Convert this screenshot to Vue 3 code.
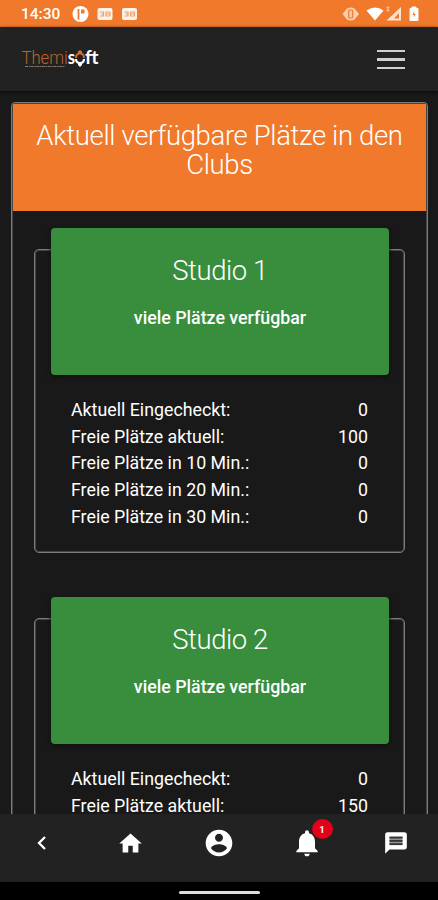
<script setup>
const clubs = [
  { name: 'Studio 1', free: 100 },
  { name: 'Studio 2', free: 150 },
].map((c) => ({
  name: c.name,
  rows: [
    ['Aktuell Eingecheckt:', 0],
    ['Freie Plätze aktuell:', c.free],
    ['Freie Plätze in 10 Min.:', 0],
    ['Freie Plätze in 20 Min.:', 0],
    ['Freie Plätze in 30 Min.:', 0],
  ],
}))
</script>

<template>
  <div class="phone">
    <div class="status">
      <span class="time">14:30</span>
      <svg class="notifications" width="66" height="18" viewBox="0 0 66 18">
        <circle cx="8.500" cy="9" r="8" fill="#fff" />
        <path d="M6.500 4v10.500" stroke="#f0792b" stroke-width="1.800" />
        <path d="M9 4.500h3.500v4H9z" fill="#f0792b" />
        <g fill="#fff4ec">
          <rect x="25.500" y="3" width="15" height="12" rx="2" />
          <rect x="50" y="3" width="15" height="12" rx="2" />
        </g>
        <g fill="none" stroke="#f0a06c" stroke-width="1.200">
          <path d="M28 7h3.500v4H28M29 9h2.500M34 7h4v4h-4zM34 9h4" />
          <path d="M52.500 7H56v4h-3.500M53.500 9H56M58.500 7h4v4h-4zM58.500 9h4" />
        </g>
      </svg>
      <svg class="system" width="78" height="18" viewBox="0 0 78 18">
        <path d="M0.500 9L5 3.500Q9 1.500 12.500 3.500L17 9l-4.500 5.500Q9 16.500 5 14.500z" fill="#fbd0b2" />
        <rect x="6.700" y="5" width="4" height="8" rx="1" fill="#fbc7a4" stroke="#f0792b" stroke-width="1.200" />
        <path d="M24.500 5.500Q33 -.5 41.500 5.500L33 15.500z" fill="#fff" />
        <path d="M44.500 15.500L59 2v13.500z" fill="#fde3d2" />
        <path d="M52 13.500L57 8v5.500z" fill="#f0792b" />
        <path d="M46 1.500v5M44.500 2.500h3M44.500 5.500h3" stroke="#f9bd94" stroke-width="1.300" />
        <path d="M68 3.500h2V2h4v1.500h2V15.500h-8z" fill="#fff" stroke="#fff" stroke-linejoin="round" />
        <path d="M72.300 6L70.500 10h1.300v2.500L73.700 9h-1.400z" fill="#f0792b" />
      </svg>
    </div>

    <header class="header">
      <svg class="logo" width="80" height="24" viewBox="0 0 80 24">
        <text x="0.500" y="17" class="logo-thin" textLength="53.500" lengthAdjust="spacingAndGlyphs">Themi<tspan class="logo-bold">s</tspan></text>
        <text x="64" y="17" class="logo-bold" textLength="13.500" lengthAdjust="spacingAndGlyphs">ft</text>
        <path d="M55 11c0-3 1.500-4.500 4-4.500s4 1.500 4 4.500" fill="none" stroke="#c9682c" stroke-width="2" />
        <path d="M57 6.500V4.500l2-1.500 2 1.500v2z" fill="#d87031" />
        <path d="M55 12c0 2.500 1.500 4 4 4s4-1.500 4-4" fill="none" stroke="#fff" stroke-width="2.200" />
        <path d="M57 15.500h4v2.500l-2 2-2-2z" fill="#fff" />
        <path d="M4 19.500h40" stroke="#85796f" stroke-dasharray="3 .7 1.500 .5" />
      </svg>
      <div class="burger"><i /><i /><i /></div>
    </header>

    <main class="content">
      <section class="card">
        <h1 class="title">Aktuell verfügbare Plätze in den Clubs</h1>
        <div class="clubs">
          <article v-for="club in clubs" :key="club.name" class="club">
            <div class="banner">
              <h2>{{ club.name }}</h2>
              <p>viele Plätze verfügbar</p>
            </div>
            <dl>
              <div v-for="row in club.rows" :key="row[0]" class="row">
                <dt>{{ row[0] }}</dt>
                <dd>{{ row[1] }}</dd>
              </div>
            </dl>
          </article>
        </div>
      </section>
    </main>

    <nav class="nav">
      <div class="tab"><svg width="28" height="28" viewBox="0 0 28 28"><path d="M17 8l-6 6 6 6" fill="none" stroke="#fff" stroke-width="2.300" /></svg></div>
      <div class="tab"><svg width="27" height="27" viewBox="0 0 24 24"><path fill="#fff" d="M10 20v-6h4v6h5v-8h3L12 3 2 12h3v8z" /></svg></div>
      <div class="tab"><svg width="32" height="32" viewBox="0 0 24 24"><path fill="#fff" d="M12 2C6.480 2 2 6.480 2 12s4.480 10 10 10 10-4.480 10-10S17.520 2 12 2zm0 3c1.660 0 3 1.340 3 3s-1.340 3-3 3-3-1.340-3-3 1.340-3 3-3zm0 14.200c-2.500 0-4.710-1.280-6-3.220.03-1.990 4-3.080 6-3.080 1.990 0 5.970 1.090 6 3.080-1.290 1.940-3.500 3.220-6 3.220z" /></svg></div>
      <div class="tab bell">
        <svg width="32" height="32" viewBox="0 0 24 24"><path fill="#fff" d="M12 22c1.100 0 2-.9 2-2h-4c0 1.100.89 2 2 2zm6-6v-5c0-3.070-1.640-5.640-4.500-6.320V4c0-.83-.67-1.500-1.500-1.500s-1.500.67-1.500 1.500v.68C7.630 5.360 6 7.920 6 11v5l-2 2v1h16v-1l-2-2z" /></svg>
        <span class="badge">1</span>
      </div>
      <div class="tab"><svg width="26" height="26" viewBox="0 0 24 24"><path fill="#fff" d="M20 2H4c-1.100 0-2 .9-2 2v18l4-4h14c1.100 0 2-.9 2-2V4c0-1.100-.9-2-2-2z" /><path fill="#929292" d="M6 6h12v8H6z" /><path d="M6 7h12M6 10h12M6 13h12" stroke="#333" stroke-width="1.500" /></svg></div>
    </nav>
    <div class="gesture"><i /></div>
  </div>
</template>

<style>
body {
  margin: 0;
  background: #000;
}
</style>

<style scoped>
.phone {
  display: flex;
  flex-direction: column;
  width: 438px;
  height: 900px;
  overflow: hidden;
  box-sizing: border-box;
  background: #191919;
  color: #fff;
  font-family: Roboto, sans-serif;
}
.status {
  flex: none;
  display: flex;
  align-items: center;
  height: 27px;
  padding: 1px 18px 0 21px;
  box-sizing: border-box;
  background: #f0792b;
}
.time {
  width: 51px;
  font-size: 15.500px;
  font-weight: 500;
}
.system {
  margin-left: auto;
}
.header {
  flex: none;
  display: flex;
  align-items: center;
  justify-content: space-between;
  height: 64px;
  padding: 0 33px 0 21px;
  box-sizing: border-box;
  background: #222;
  box-shadow: 0 1px 3px #0b0b0b;
}
.logo-thin {
  fill: #bd622c;
  font: 300 18px Roboto, sans-serif;
}
.logo-bold {
  fill: #fff;
  font: 700 18px Lato, sans-serif;
}
.burger {
  display: flex;
  flex-direction: column;
  gap: 6px;
  width: 28px;
  padding-top: 1px;
}
.burger i {
  height: 2.400px;
  background: #d0d0d0;
}
.content {
  flex: 1;
  min-height: 0;
  overflow: hidden;
  padding: 11px 10px 0 11px;
}
.card {
  padding: 1px;
  border: 1px solid #7c7c7c;
  box-shadow: inset 0 0 0 1px #444;
  border-radius: 4px;
  height: 1000px;
  box-sizing: border-box;
  overflow: hidden;
}
.title {
  margin: 0;
  height: 107px;
  padding: 17px 16px 0;
  box-sizing: border-box;
  background: #f0792b;
  font-size: 27.500px;
  font-weight: 300;
  letter-spacing: -0.350px;
  line-height: 29.300px;
  text-align: center;
}
.clubs {
  display: flex;
  flex-direction: column;
  gap: 65px;
  padding: 38px 21px 0;
}
.club {
  height: 304px;
  box-sizing: border-box;
  padding: 1px 15px 1px 16px;
  border: 1px solid #7c7c7c;
  box-shadow: inset 0 0 0 1px #444;
  border-radius: 5px;
}
.banner {
  height: 147px;
  margin-top: -23px;
  padding-top: 28px;
  box-sizing: border-box;
  border-radius: 4px;
  background: #388e3c;
  box-shadow: 0 2px 5px #101010;
  text-align: center;
}
h2 {
  margin: 0;
  font-size: 27.500px;
  font-weight: 300;
  letter-spacing: -0.450px;
  line-height: 30px;
}
.banner p {
  margin: 19px 0 0;
  font-size: 17.800px;
  font-weight: 500;
  line-height: 26px;
}
dl {
  margin: 22px 21px 0 20px;
}
.row {
  display: flex;
  justify-content: space-between;
  font-size: 17.800px;
  line-height: 26.700px;
}
dd {
  margin: 0;
}
.nav {
  flex: none;
  display: flex;
  align-items: center;
  justify-content: space-between;
  height: 68px;
  padding: 0 26px 10px;
  box-sizing: border-box;
  background: #222;
}
.tab {
  display: flex;
  align-items: center;
  justify-content: center;
  width: 32px;
  height: 32px;
}
.bell {
  position: relative;
  margin: 0 1px 0 -1px;
}
.badge {
  position: absolute;
  left: 21px;
  top: -8px;
  width: 21px;
  height: 20px;
  border-radius: 50%;
  background: #e2001a;
  font-size: 9.500px;
  font-weight: 700;
  line-height: 21px;
  text-align: center;
}
.gesture {
  flex: none;
  display: flex;
  align-items: center;
  justify-content: center;
  height: 18px;
  padding-top: 2px;
  box-sizing: border-box;
  background: #000;
}
.gesture i {
  width: 81px;
  height: 3px;
  border-radius: 2px;
  background: #ddd;
}
</style>
